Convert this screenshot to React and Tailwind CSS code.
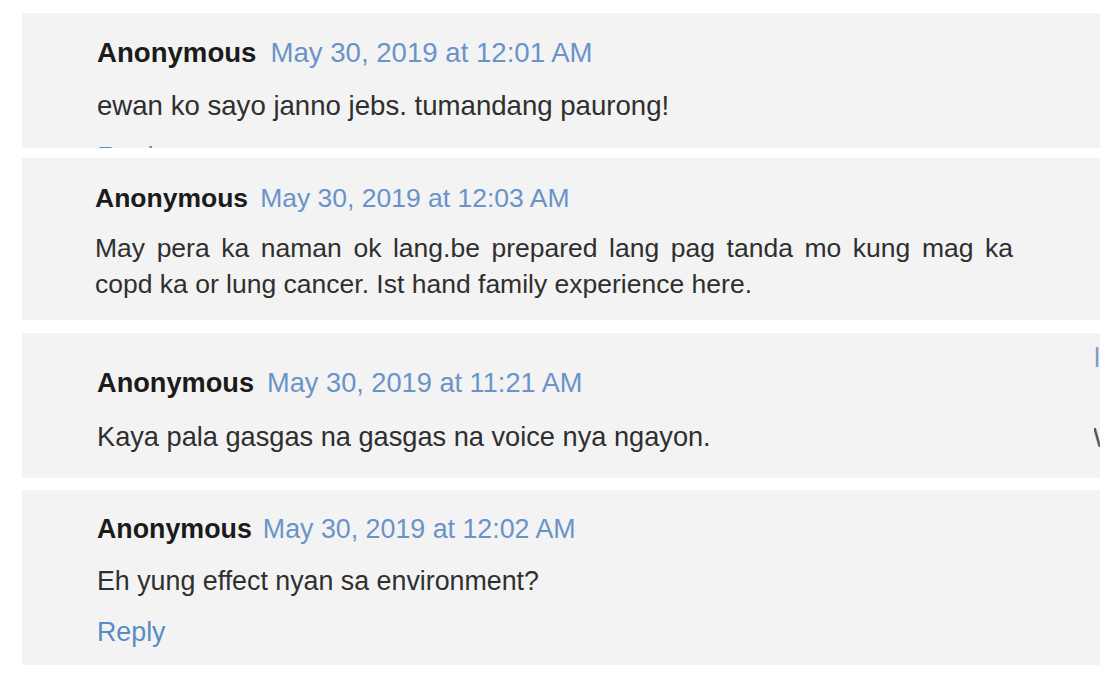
const comments = [
  {
    panel: 'mt-[13px] h-[135px] pt-[22px] pl-[75px]',
    size: 'text-[27.6px]',
    date: 'May 30, 2019 at 12:01 AM',
    dateGap: 'ml-[14px]',
    body: ['ewan ko sayo janno jebs. tumandang paurong!'],
    bodyGap: 'mt-[17px]',
    reply: true,
    replyGap: 'mt-[15px]',
  },
  {
    panel: 'mt-[10px] h-[162px] pt-[22px] pl-[73px] pr-[87px]',
    size: 'text-[26.5px]',
    date: 'May 30, 2019 at 12:03 AM',
    dateGap: 'ml-[12px]',
    body: ['May pera ka naman ok lang.be prepared lang pag tanda mo kung mag ka copd ka or lung cancer. Ist hand family experience here.'],
    bodyGap: 'mt-[14px]',
    justify: true,
  },
  {
    panel: 'mt-[13px] h-[145px] pt-[32px] pl-[75px]',
    size: 'text-[27.2px]',
    date: 'May 30, 2019 at 11:21 AM',
    dateGap: 'ml-[13px]',
    body: ['Kaya pala gasgas na gasgas na voice nya ngayon.'],
    bodyGap: 'mt-[18px]',
    edge: true,
  },
  {
    panel: 'mt-[12px] h-[175px] pt-[21px] pl-[75px]',
    size: 'text-[26.8px]',
    date: 'May 30, 2019 at 12:02 AM',
    dateGap: 'ml-[11px]',
    body: ['Eh yung effect nyan sa environment?'],
    bodyGap: 'mt-[16px]',
    reply: true,
    replyGap: 'mt-[15px]',
  },
];

function Comment({ c }) {
  return (
    <div className={`relative flex w-[1078px] overflow-hidden bg-[#f3f3f3] ${c.panel}`}>
      <div className={`flex-1 leading-[36px] ${c.size}`}>
        <div className="flex whitespace-nowrap">
          <span className="font-bold text-[#1b1b1b]">Anonymous</span>
          <span className={`text-[#6a93c9] ${c.dateGap}`}>{c.date}</span>
        </div>
        {c.body.map((t, i) => (
          <p key={i} className={`text-[#2f2f2f] ${c.bodyGap} ${c.justify ? 'text-justify' : ''}`}>
            {t}
          </p>
        ))}
        {c.reply && <div className={`text-[#5b8bc6] ${c.replyGap}`}>Reply</div>}
      </div>
      {c.edge && (
        // neighbouring text that was cut off at the right edge of the crop
        <div className="-mt-[25px] w-[6px] shrink-0 self-start overflow-hidden text-[27px] leading-[36px]">
          <div className="text-[#7f9cc4]">l</div>
          <div className="mt-[44px] -ml-[1px] text-[#555]">W</div>
        </div>
      )}
    </div>
  );
}

export default function App() {
  return (
    <div className="h-[685px] w-[1120px] overflow-hidden bg-white pl-[22px] font-['Liberation_Sans',Arial,sans-serif]">
      {comments.map((c, i) => (
        <Comment key={i} c={c} />
      ))}
    </div>
  );
}
